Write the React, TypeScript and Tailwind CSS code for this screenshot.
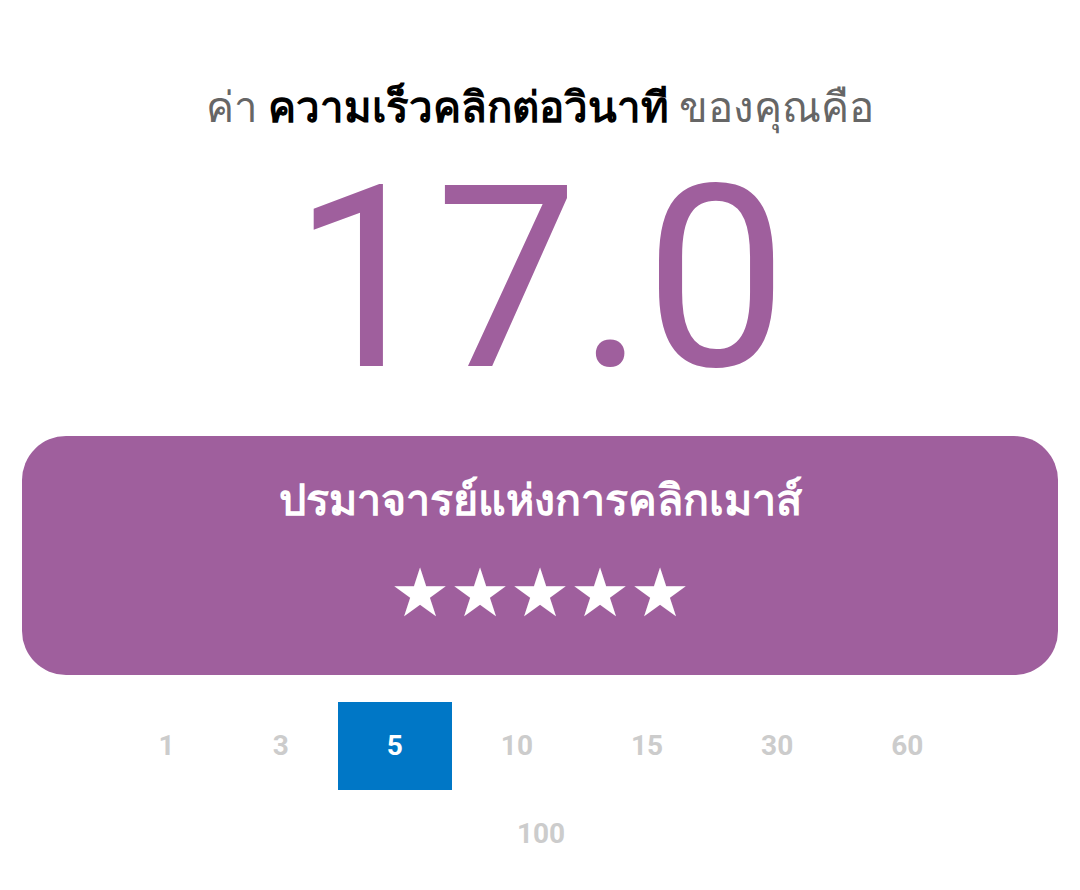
const DURATIONS = [1, 3, 5, 10, 15, 30, 60, 100]

export default function App() {
  const active = 5
  return (
    <div className="min-h-[890px] w-[1080px] bg-white font-['Roboto','Noto_Sans',sans-serif]">
      <div className="flex flex-col items-center pt-[84px]">
        <h1 className="text-[42px] leading-[48px] text-[#666666]">
          ค่า <span className="font-bold text-black">ความเร็วคลิกต่อวินาที</span> ของคุณคือ
        </h1>
        <div className="mt-[27px] text-[254px] leading-[240px] text-[#9f5f9d]">17.0</div>
      </div>

      <div className="mx-[22px] mt-[37px] flex h-[239px] flex-col items-center rounded-[44px] bg-[#9f5f9d] pt-[40px] text-white">
        <div className="text-[43px] font-bold leading-[48px]">ปรมาจารย์แห่งการคลิกเมาส์</div>
        <div className="mt-[34px] text-[67px] leading-[70px]">★★★★★</div>
      </div>

      <div className="ml-[51px] mt-[27px] flex w-[980px] flex-wrap justify-center">
        {DURATIONS.map((d) => (
          <button
            key={d}
            className={
              d === active
                ? 'h-[88px] bg-[#0077c6] px-[49px] text-[28px] font-bold text-white'
                : 'h-[88px] px-[49px] text-[28px] font-bold text-[#cccccc]'
            }
          >
            {d}
          </button>
        ))}
      </div>
    </div>
  )
}
